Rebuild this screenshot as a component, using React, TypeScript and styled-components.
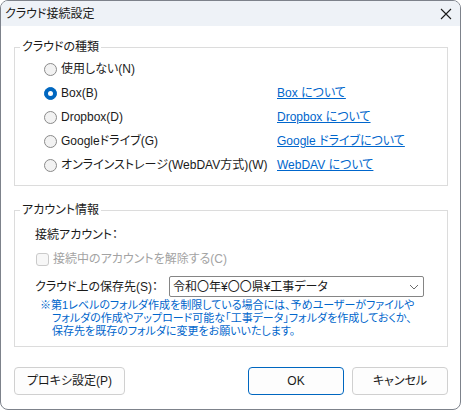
import React from "react";
import styled, { createGlobalStyle, css } from "styled-components";

const GlobalStyle = createGlobalStyle`
  html, body {
    margin: 0;
    padding: 0;
    background: #ffffff;
  }
  body {
    font-family: "Liberation Sans", "Noto Sans CJK JP", sans-serif;
    font-size: 12px;
    color: #1a1a1a;
    font-feature-settings: "palt";
  }
  * { box-sizing: border-box; }
`;

const Window = styled.div`
  width: 461px;
  height: 410px;
  border: 1px solid #7d828b;
  border-radius: 8px;
  overflow: hidden;
  background: #ffffff;
  display: flex;
  flex-direction: column;
`;

const TitleBar = styled.div`
  height: 25px;
  background: #eef2f7;
  display: flex;
  align-items: center;
  justify-content: space-between;
  padding: 0 8px 0 4px;
`;

const Title = styled.div`
  font-size: 12px;
  line-height: 16px;
  color: #1a1a1a;
`;

const CloseIcon = styled.svg`
  width: 12px;
  height: 12px;
  display: block;
`;

const Body = styled.div`
  padding: 0 0 0 13px;
  display: flex;
  flex-direction: column;
`;

const Group = styled.fieldset<{ $top: number }>`
  margin: ${(p) => p.$top}px 0 0 0;
  padding: 0 0 8px 0;
  width: 434px;
  min-width: 0;
  border: 1px solid #dcdcdc;
`;

const Legend = styled.legend`
  padding: 0 2px;
  margin-left: 5px;
  line-height: 16px;
  font-size: 12px;
  color: #1a1a1a;
`;

const OptionList = styled.div`
  padding: 2px 0 0 29px;
  display: flex;
  flex-direction: column;
`;

const OptionRow = styled.div`
  height: 24px;
  display: grid;
  grid-template-columns: 233px auto;
  align-items: center;
`;

const RadioLabel = styled.label`
  display: flex;
  align-items: center;
  gap: 4px;
  line-height: 16px;
  white-space: nowrap;
`;

const Radio = styled.span<{ $checked?: boolean }>`
  width: 13px;
  height: 13px;
  border-radius: 50%;
  flex: none;
  position: relative;
  ${(p) =>
    p.$checked
      ? css`
          background: #0067c0;
          border: 1px solid #0067c0;
          &::after {
            content: "";
            position: absolute;
            left: 3px;
            top: 3px;
            width: 5px;
            height: 5px;
            border-radius: 50%;
            background: #ffffff;
          }
        `
      : css`
          background: #f2f2f2;
          border: 1px solid #8a8a8a;
        `}
`;

const InfoLink = styled.a`
  color: #0066cc;
  text-decoration: underline;
  line-height: 16px;
  white-space: nowrap;
  cursor: pointer;
`;

const AccountArea = styled.div`
  padding: 5px 0 0 20px;
  display: flex;
  flex-direction: column;
`;

const TextRow = styled.div`
  height: 24px;
  display: flex;
  align-items: center;
  line-height: 16px;
`;

const CheckRow = styled.label<{ $disabled?: boolean }>`
  height: 24px;
  display: flex;
  align-items: center;
  gap: 4px;
  padding-left: 1px;
  line-height: 16px;
  color: ${(p) => (p.$disabled ? "#a3a3a3" : "#1a1a1a")};
`;

const CheckBox = styled.span`
  width: 13px;
  height: 13px;
  border: 1px solid #cacaca;
  background: #f7f7f7;
  border-radius: 3px;
  flex: none;
`;

const FieldRow = styled.div`
  margin-top: 5px;
  display: grid;
  grid-template-columns: 134px 255px;
  align-items: center;
`;

const FieldLabel = styled.span`
  line-height: 16px;
  white-space: nowrap;
`;

const Combo = styled.div`
  height: 21px;
  border: 1px solid #858585;
  border-radius: 2px;
  background: #ffffff;
  display: flex;
  align-items: center;
  justify-content: space-between;
  padding: 0 3px 0 3px;
  line-height: 16px;
  white-space: nowrap;
`;

const ChevronIcon = styled.svg`
  width: 10px;
  height: 6px;
  display: block;
  margin-right: 1px;
`;

const Note = styled.div`
  margin-top: 2px;
  padding-left: 5px;
  color: #0066cc;
  font-size: 11px;
  line-height: 13px;
  display: flex;
  flex-direction: column;
`;

const NoteLine = styled.div<{ $indent?: boolean }>`
  padding-left: ${(p) => (p.$indent ? "12px" : "0")};
  white-space: nowrap;
`;

const ButtonBar = styled.div`
  width: 434px;
  margin-top: 20px;
  display: flex;
  justify-content: space-between;
`;

const ButtonGroup = styled.div`
  display: flex;
  gap: 8px;
`;

const Button = styled.button<{ $width: number; $default?: boolean }>`
  width: ${(p) => p.$width}px;
  height: 28px;
  border: 1px solid ${(p) => (p.$default ? "#0067c0" : "#d0d0d0")};
  border-radius: 4px;
  background: #fdfdfd;
  font-family: "Liberation Sans", "Noto Sans CJK JP", sans-serif;
  font-size: 12px;
  font-feature-settings: "palt";
  color: #1a1a1a;
  padding: 0;
  line-height: 16px;
`;

const options = [
  { label: "使用しない(N)", link: "", checked: false },
  { label: "Box(B)", link: "Box について", checked: true },
  { label: "Dropbox(D)", link: "Dropbox について", checked: false },
  { label: "Googleドライブ(G)", link: "Google ドライブについて", checked: false },
  { label: "オンラインストレージ(WebDAV方式)(W)", link: "WebDAV について", checked: false },
];

export default function App() {
  return (
    <>
      <GlobalStyle />
      <Window>
        <TitleBar>
          <Title>クラウド接続設定</Title>
          <CloseIcon viewBox="0 0 12 12">
            <path d="M1 1 L11 11 M11 1 L1 11" stroke="#1a1a1a" strokeWidth="1.1" fill="none" />
          </CloseIcon>
        </TitleBar>
        <Body>
          <Group $top={13}>
            <Legend>クラウドの種類</Legend>
            <OptionList>
              {options.map((o) => (
                <OptionRow key={o.label}>
                  <RadioLabel>
                    <Radio $checked={o.checked} />
                    <span>{o.label}</span>
                  </RadioLabel>
                  {o.link ? <InfoLink>{o.link}</InfoLink> : <span />}
                </OptionRow>
              ))}
            </OptionList>
          </Group>
          <Group $top={16}>
            <Legend>アカウント情報</Legend>
            <AccountArea>
              <TextRow>接続アカウント：</TextRow>
              <CheckRow $disabled>
                <CheckBox />
                <span>接続中のアカウントを解除する(C)</span>
              </CheckRow>
              <FieldRow>
                <FieldLabel>クラウド上の保存先(S)：</FieldLabel>
                <Combo>
                  <span>令和〇年¥〇〇県¥工事データ</span>
                  <ChevronIcon viewBox="0 0 10 6">
                    <path d="M1 1 L5 5 L9 1" stroke="#6b6b6b" strokeWidth="1" fill="none" />
                  </ChevronIcon>
                </Combo>
              </FieldRow>
              <Note>
                <NoteLine>※第1レベルのフォルダ作成を制限している場合には、予めユーザーがファイルや</NoteLine>
                <NoteLine $indent>フォルダの作成やアップロード可能な「工事データ」フォルダを作成しておくか、</NoteLine>
                <NoteLine $indent>保存先を既存のフォルダに変更をお願いいたします。</NoteLine>
              </Note>
            </AccountArea>
          </Group>
          <ButtonBar>
            <Button $width={111}>プロキシ設定(P)</Button>
            <ButtonGroup>
              <Button $width={96} $default>OK</Button>
              <Button $width={96}>キャンセル</Button>
            </ButtonGroup>
          </ButtonBar>
        </Body>
      </Window>
    </>
  );
}
